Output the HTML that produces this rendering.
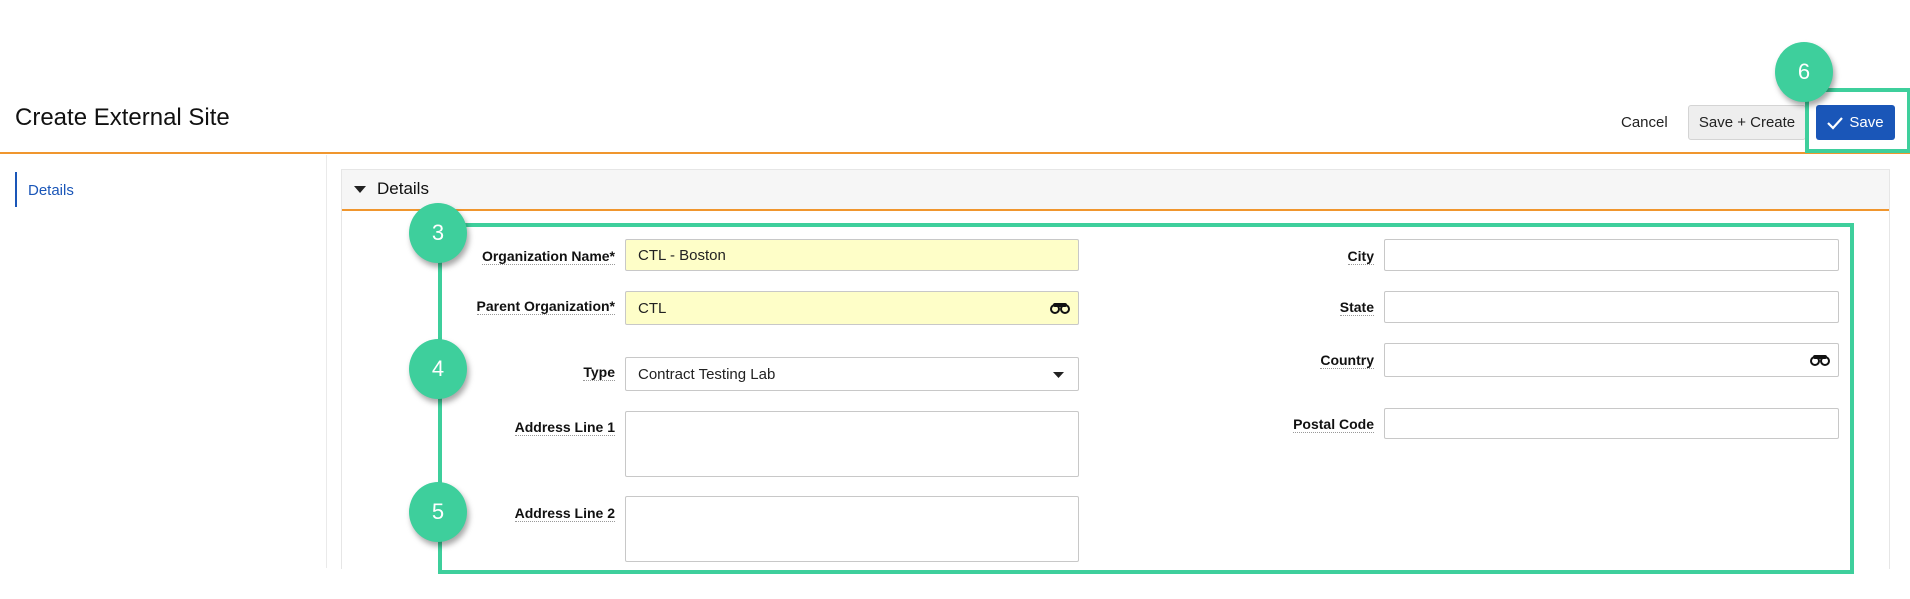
<!DOCTYPE html>
<html><head><meta charset="utf-8"><style>
*{box-sizing:border-box;margin:0;padding:0}
body{width:1910px;height:599px;background:#fff;font-family:"Liberation Sans",Arial,sans-serif;color:#222;position:relative;overflow:hidden}
.a{position:absolute}
.inp{position:absolute;border:1px solid #c8c8c8;border-radius:2px;background:#fff;font-size:15px;padding-left:12px;display:flex;align-items:center;color:#222}
.y{background:#fefec8}
.lbl{position:absolute;font-weight:bold;font-size:14px;color:#111;text-align:right;border-bottom:1px dotted #999;line-height:16px;white-space:nowrap}
.circ{position:absolute;width:58px;height:60px;border-radius:50%;background:#3ecf9c;color:#fff;font-size:22px;display:flex;align-items:center;justify-content:center;box-shadow:2px 4px 6px rgba(0,0,0,.35)}
.bin{position:absolute;right:8px;top:50%;margin-top:-6px}
</style></head><body>
<div class="a" style="left:15px;top:104px;font-size:24px;color:#111">Create External Site</div>
<div class="a" style="left:0;top:152px;width:1910px;height:2px;background:#f0962e"></div>
<div class="a" style="left:1621px;top:114px;font-size:15px">Cancel</div>
<div class="a" style="left:1688px;top:105px;width:118px;height:35px;background:#eee;border:1px solid #d4d4d4;border-radius:3px;font-size:15px;display:flex;align-items:center;justify-content:center">Save + Create</div>
<div class="a" style="left:1816px;top:105px;width:79px;height:35px;background:#1a56b8;border-radius:3px;color:#fff;font-size:15px;display:flex;align-items:center;justify-content:center"><svg width="16" height="14" viewBox="0 0 16 14" style="margin-right:6px"><path d="M1 7l5 5L15 2" stroke="#fff" stroke-width="2.2" fill="none"/></svg>Save</div>
<div class="a" style="left:1805px;top:88px;width:106px;height:65px;border:4px solid #3ecf9c"></div>
<div class="circ" style="left:1775px;top:42px">6</div>

<div class="a" style="left:15px;top:172px;width:2px;height:35px;background:#1a56b8"></div>
<div class="a" style="left:28px;top:182px;font-size:15px;color:#1a56b8">Details</div>
<div class="a" style="left:326px;top:155px;width:1px;height:413px;background:#eaeaea"></div>

<div class="a" style="left:341px;top:169px;width:1549px;height:400px;border:1px solid #e6e6e6;border-bottom:none"></div>
<div class="a" style="left:342px;top:170px;width:1547px;height:39px;background:#f6f6f6"></div>
<div class="a" style="left:342px;top:209px;width:1547px;height:2px;background:#f0962e"></div>
<svg class="a" style="left:354px;top:186px" width="12" height="8"><path d="M0 0h12L6 7z" fill="#222"/></svg>
<div class="a" style="left:377px;top:179px;font-size:17px;color:#111">Details</div>

<div class="a" style="left:438px;top:223px;width:1416px;height:351px;border:4px solid #3ecf9c;border-right-width:4px"></div>

<div class="lbl" style="right:1295px;top:248px">Organization Name*</div>
<div class="inp y" style="left:625px;top:239px;width:454px;height:32px">CTL - Boston</div>
<div class="lbl" style="right:1295px;top:298px">Parent Organization*</div>
<div class="inp y" style="left:625px;top:291px;width:454px;height:34px">CTL<svg class="bin" width="20" height="12" viewBox="0 0 20 12"><circle cx="5" cy="7" r="4" stroke="#111" stroke-width="2" fill="none"/><circle cx="15" cy="7" r="4" stroke="#111" stroke-width="2" fill="none"/><rect x="3" y="1" width="14" height="4" rx="2" fill="#111"/></svg></div>
<div class="lbl" style="right:1295px;top:364px">Type</div>
<div class="inp" style="left:625px;top:357px;width:454px;height:34px">Contract Testing Lab<svg class="a" style="right:14px;top:14px" width="11" height="7"><path d="M0 0h11L5.5 6z" fill="#222"/></svg></div>
<div class="lbl" style="right:1295px;top:419px">Address Line 1</div>
<div class="inp" style="left:625px;top:411px;width:454px;height:66px"></div>
<div class="lbl" style="right:1295px;top:505px">Address Line 2</div>
<div class="inp" style="left:625px;top:496px;width:454px;height:66px"></div>

<div class="lbl" style="right:536px;top:248px">City</div>
<div class="inp" style="left:1384px;top:239px;width:455px;height:32px"></div>
<div class="lbl" style="right:536px;top:299px">State</div>
<div class="inp" style="left:1384px;top:291px;width:455px;height:32px"></div>
<div class="lbl" style="right:536px;top:352px">Country</div>
<div class="inp" style="left:1384px;top:343px;width:455px;height:34px"><svg class="bin" width="20" height="12" viewBox="0 0 20 12"><circle cx="5" cy="7" r="4" stroke="#111" stroke-width="2" fill="none"/><circle cx="15" cy="7" r="4" stroke="#111" stroke-width="2" fill="none"/><rect x="3" y="1" width="14" height="4" rx="2" fill="#111"/></svg></div>
<div class="lbl" style="right:536px;top:416px">Postal Code</div>
<div class="inp" style="left:1384px;top:408px;width:455px;height:31px"></div>

<div class="circ" style="left:409px;top:203px">3</div>
<div class="circ" style="left:409px;top:339px">4</div>
<div class="circ" style="left:409px;top:482px">5</div>
</body></html>
